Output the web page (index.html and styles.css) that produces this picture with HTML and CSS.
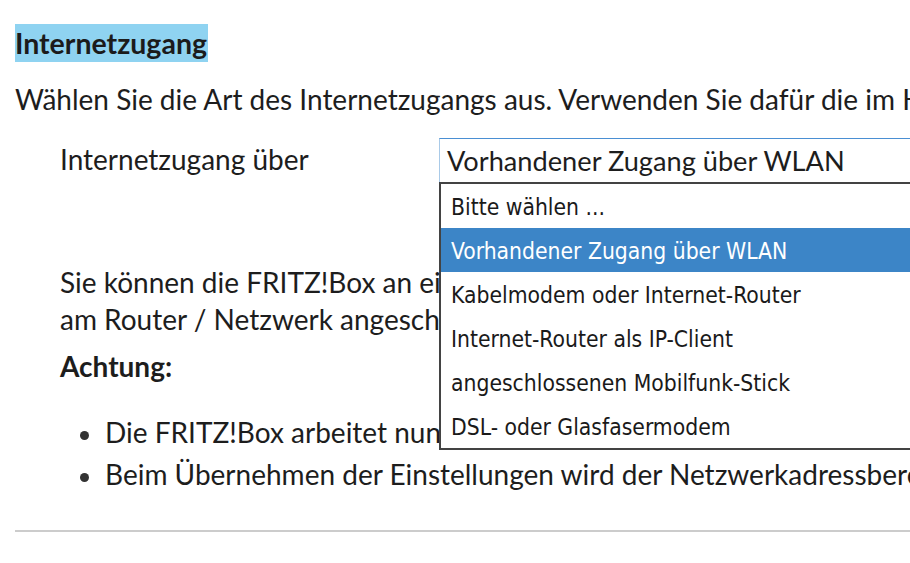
FILE: index.html
```html
<!DOCTYPE html>
<html lang="de">
<head>
<meta charset="utf-8">
<title>Internetzugang</title>
<link rel="stylesheet" href="styles.css">
</head>
<body>
<div class="page">
  <h1 class="title">Internetzugang</h1>
  <p class="intro">Wählen Sie die Art des Internetzugangs aus. Verwenden Sie dafür die im Handbuch beschriebenen Angaben Ihres Anbieters.</p>

  <div class="row">
    <span class="label">Internetzugang über</span>
    <div class="select-wrap">
      <div class="select">Vorhandener Zugang über WLAN</div>
      <ul class="dropdown">
        <li class="opt">Bitte wählen ...</li>
        <li class="opt sel">Vorhandener Zugang über WLAN</li>
        <li class="opt">Kabelmodem oder Internet-Router</li>
        <li class="opt">Internet-Router als IP-Client</li>
        <li class="opt">angeschlossenen Mobilfunk-Stick</li>
        <li class="opt">DSL- oder Glasfasermodem</li>
      </ul>
    </div>
  </div>

  <div class="info">
    <p class="line">Sie können die FRITZ!Box an einen vorhandenen WLAN-Zugangspunkt anschließen, der</p>
    <p class="line">am Router / Netzwerk angeschlossen ist. Die FRITZ!Box nutzt dann diesen Zugang.</p>
    <p class="warn">Achtung:</p>
    <ul class="bullets">
      <li class="bullet">Die FRITZ!Box arbeitet nun als WLAN-Client im vorhandenen Netzwerk.</li>
      <li class="bullet">Beim Übernehmen der Einstellungen wird der Netzwerkadressbereich der FRITZ!Box geändert.</li>
    </ul>
  </div>

  <div class="rule"></div>
</div>
</body>
</html>
```
FILE: styles.css
```css
html, body {
  margin: 0;
  padding: 0;
  background: #ffffff;
}
body {
  width: 910px;
  height: 563px;
  overflow: hidden;
  font-family: "Lato", "Open Sans", sans-serif;
  font-size: 28px;
  color: #1d1d1d;
}
.page {
  padding: 24px 0 0 15px;
  width: 1300px;
}
.title {
  display: inline-block;
  margin: 0;
  font-size: 28.5px;
  font-weight: 700;
  line-height: 38px;
  padding-right: 1px;
  background: #8fd3f1;
  color: #1b1b1b;
}
.intro {
  margin: 19px 0 0 0;
  line-height: 37px;
  white-space: nowrap;
}
.row {
  position: relative;
  display: flex;
  align-items: center;
  margin-top: 20px;
  padding-left: 45px;
  height: 44px;
}
.label {
  width: 379px;
  flex: none;
  line-height: 44px;
  white-space: nowrap;
  padding-bottom: 2px;
}
.select-wrap {
  position: relative;
  flex: none;
}
.select {
  box-sizing: border-box;
  width: 620px;
  height: 44px;
  border: 1px solid #a9cae8;
  border-top-color: #4a8fd3;
  border-bottom: none;
  padding-left: 7px;
  font-size: 27.2px;
  line-height: 43px;
  white-space: nowrap;
  color: #1d1d1d;
}
.dropdown {
  position: absolute;
  top: 44px;
  left: 0;
  z-index: 5;
  width: 620px;
  margin: 0;
  padding: 0;
  list-style: none;
  background: #ffffff;
  border: 2px solid #434343;
  font-family: "DejaVu Sans Condensed", "DejaVu Sans", sans-serif;
  font-stretch: condensed;
  font-size: 22.7px;
  color: #1a1a1a;
}
.opt {
  height: 44px;
  box-sizing: border-box;
  padding-top: 2px;
  line-height: 42px;
  padding-left: 10px;
  white-space: nowrap;
}
.opt.sel {
  background: #3c85c7;
  color: #ffffff;
}
.info {
  margin-top: 82px;
  padding-left: 45px;
}
.line {
  margin: 0;
  line-height: 37px;
  white-space: nowrap;
}
.warn {
  margin: 10px 0 0 0;
  line-height: 37px;
  font-weight: 700;
}
.bullets {
  list-style: none;
  margin: 26px 0 0 0;
  padding: 0 0 0 20px;
}
.bullet {
  line-height: 42px;
  white-space: nowrap;
}
.bullet::before {
  content: "";
  display: inline-block;
  width: 9px;
  height: 9px;
  border-radius: 50%;
  background: #333333;
  margin-right: 16px;
  vertical-align: 3.5px;
}
.rule {
  margin-top: 35px;
  height: 2px;
  background: #cccccc;
}
```
